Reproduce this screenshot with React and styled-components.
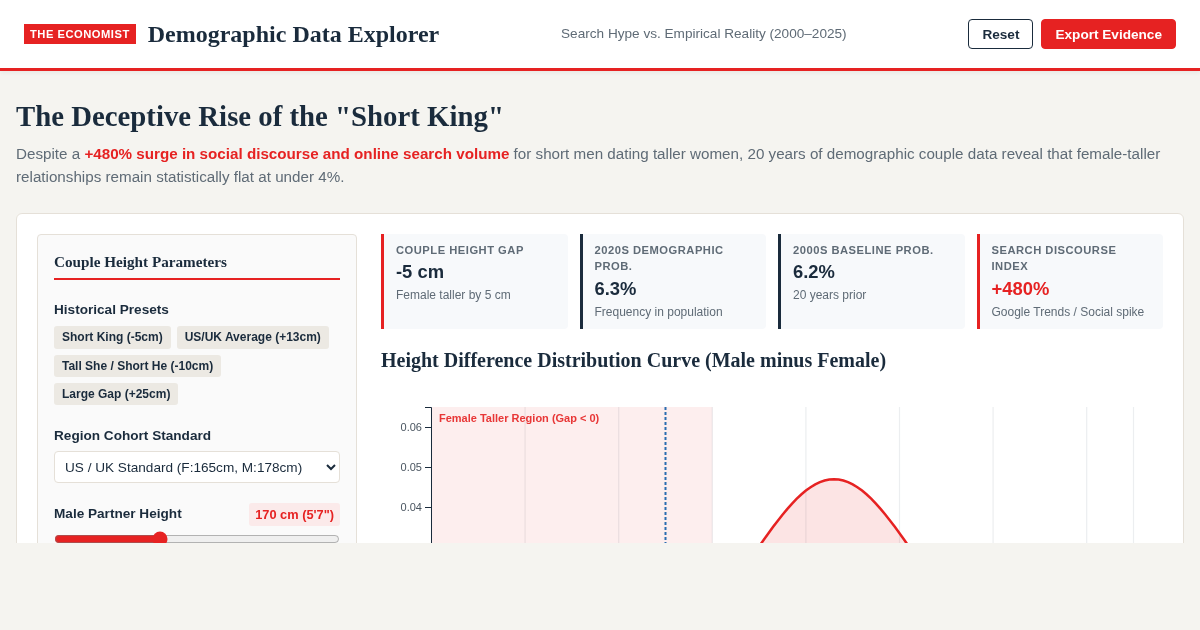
import React from 'react';
import styled, { createGlobalStyle } from 'styled-components';

const RED = '#e62222';
const NAVY = '#1a2b3c';
const GRAY = '#5f6b76';
const SANS = '"Liberation Sans", Arial, sans-serif';
const SERIF = '"Liberation Serif", "Times New Roman", serif';

const Global = createGlobalStyle`
  html, body { margin: 0; padding: 0; background: #f5f4f0; }
  * { box-sizing: border-box; }
  body { font-family: ${SANS}; color: ${NAVY}; }
`;
const Page = styled.div`height: 543px; overflow: hidden; will-change: transform;`;
const Header = styled.header`
  height: 71px; background: #fff; border-bottom: 3px solid ${RED};
  padding: 0 24px; display: flex; align-items: center; justify-content: space-between;
  box-shadow: 0 2px 4px rgba(0,0,0,.05); position: relative;
`;
const Brand = styled.div`display: flex; align-items: center; gap: 12px;`;
const Badge = styled.span`
  background: ${RED}; color: #fff; font-size: 11.2px; font-weight: 700; letter-spacing: .5px;
  padding: 0 6px; height: 20px; line-height: 20px; display: block;
`;
const AppTitle = styled.h1`margin: 0; font: 700 24px/30px ${SERIF}; color: ${NAVY};`;
const Subtitle = styled.div`font-size: 13.6px; color: ${GRAY}; position: relative; top: -1px;`;
const Actions = styled.div`display: flex; gap: 8px;`;
const Button = styled.button`
  height: 30px; padding: 0 13px; border-radius: 4px; font: 700 13.6px ${SANS};
  border: 1px solid ${p => (p.$primary ? RED : NAVY)};
  background: ${p => (p.$primary ? RED : '#fff')};
  color: ${p => (p.$primary ? '#fff' : NAVY)};
`;
const Main = styled.main`padding: 27px 16px 0;`;
const Headline = styled.h2`margin: 0 0 9px; font: 700 28.8px/36px ${SERIF}; color: ${NAVY};`;
const Lead = styled.p`margin: 0 0 24.8px; font-size: 15.2px; line-height: 22.8px; color: ${GRAY};`;
const Strong = styled.strong`color: ${RED}; font-weight: 700;`;
const Card = styled.section`
  background: #fff; border: 1px solid #e5e0d8; border-radius: 6px; padding: 20px;
  display: grid; grid-template-columns: 320px 1fr; gap: 24px;
`;
const Sidebar = styled.aside`
  background: #fafafa; border: 1px solid #e5e0d8; border-radius: 4px; padding: 16px;
`;
const SideTitle = styled.h3`
  margin: 0 0 20px; height: 29px; border-bottom: 2px solid ${RED};
  font: 700 15.2px/22px ${SERIF}; color: ${NAVY};
`;
const Field = styled.div`margin-bottom: 20.2px;`;
const Label = styled.div`font-size: 13.6px; line-height: 20px; font-weight: 700; color: ${NAVY};`;
const RangeLabel = styled(Label)`line-height: 21px;`;
const Chips = styled.div`display: flex; flex-wrap: wrap; gap: 6px; margin-top: 5.8px;`;
const Chip = styled.button`
  height: 22.4px; padding: 0 8px; border: 0; border-radius: 3px; background: #ece9e3;
  font: 700 12px ${SANS}; color: ${NAVY};
`;
const Select = styled.select`
  display: block; width: 100%; height: 32px; margin-top: 5.6px; padding: 0 6px; background: #fff;
  border: 1px solid #e5e0d8; border-radius: 4px; font: 13.6px ${SANS}; color: ${NAVY};
`;
const RangeHead = styled.div`display: flex; justify-content: space-between; align-items: flex-start;`;
const RangeValue = styled.span`
  background: #fbeaea; color: ${RED}; font-size: 12.8px; font-weight: 700; padding: 0 6px;
  height: 23px; line-height: 23px; border-radius: 3px;
`;
const Range = styled.input`
  display: block; width: 100%; margin: 5px 0 0; accent-color: ${RED};
`;
const Content = styled.div`min-width: 0;`;
const Stats = styled.div`display: grid; grid-template-columns: repeat(4, 1fr); gap: 12px;`;
const Stat = styled.div`
  background: #f7f9fb; border-left: 3px solid ${p => (p.$red ? RED : NAVY)};
  border-radius: 0 4px 4px 0; padding: 8px 12px; height: 95px;
`;
const StatLabel = styled.div`
  font-size: 11.2px; line-height: 16.08px; font-weight: 700; color: ${GRAY};
  letter-spacing: .5px; text-transform: uppercase;
`;
const StatValue = styled.div`
  font-size: 18.4px; line-height: 28px; font-weight: 700; color: ${p => (p.$red ? RED : NAVY)};
`;
const StatNote = styled.div`font-size: 12px; line-height: 18px; color: ${GRAY};`;
const ChartTitle = styled.h3`margin: 16px 0 12px; font: 700 20px/30px ${SERIF}; color: ${NAVY};`;
const Chart = styled.svg`display: block; width: 782px; height: 300px; font-family: ${SANS};`;

const stats = [
  { label: 'Couple Height Gap', value: '-5 cm', note: 'Female taller by 5 cm', red: true },
  { label: '2020s Demographic Prob.', value: '6.3%', note: 'Frequency in population' },
  { label: '2000s Baseline Prob.', value: '6.2%', note: '20 years prior' },
  { label: 'Search Discourse Index', value: '+480%', note: 'Google Trends / Social spike', red: true, redValue: true },
];
const presets = ['Short King (-5cm)', 'US/UK Average (+13cm)', 'Tall She / Short He (-10cm)', 'Large Gap (+25cm)'];

const X = g => 331.3 + (g * 702) / 75;
const Y = d => 40 + (0.06 - d) * 4000;
const pdf = g => Math.exp(-((g - 13) ** 2) / (2 * 8.5 * 8.5)) / (8.5 * Math.sqrt(2 * Math.PI));

function buildCurve() {
  const pts = [];
  for (let g = -30; g <= 45; g += 0.5) pts.push(`${X(g).toFixed(2)},${Y(pdf(g)).toFixed(2)}`);
  return pts;
}

function DistributionChart() {
  const pts = buildCurve();
  const line = `M${pts.join('L')}`;
  const area = `${line}L${X(45)},280L${X(-30)},280Z`;
  const grid = [-30, -20, -10, 0, 10, 20, 30, 40, 45];
  return (
    <Chart viewBox="0 0 782 300">
      {grid.map(g => <line key={g} x1={X(g)} x2={X(g)} y1="20" y2="280" stroke="#eceef0" strokeWidth="1.2" />)}
      <rect x={X(-30)} y="20" width={X(0) - X(-30)} height="260" fill={RED} fillOpacity="0.08" />
      <path d={area} fill={RED} fillOpacity="0.12" />
      <path d={line} fill="none" stroke={RED} strokeWidth="2.5" />
      <line x1={X(-5)} x2={X(-5)} y1="20" y2="280" stroke="#2b6cb0" strokeWidth="2" strokeDasharray="3 2" />
      <path d="M44 20.5H50.5V280" fill="none" stroke={NAVY} strokeWidth="1" />
      {[[0.06, 40], [0.05, 80], [0.04, 120]].map(([v, y]) => (
        <g key={v}>
          <line x1="44" x2="50" y1={y + 0.5} y2={y + 0.5} stroke={NAVY} />
          <text x="41" y={y + 4} textAnchor="end" fontSize="11" fill="#4a5560">{v.toFixed(2)}</text>
        </g>
      ))}
      <text x="58" y="35" fontSize="11" fontWeight="700" fill={RED} fillOpacity="0.9">Female Taller Region (Gap &lt; 0)</text>
    </Chart>
  );
}

export default function App() {
  return (
    <Page>
      <Global />
      <Header>
        <Brand>
          <Badge>THE ECONOMIST</Badge>
          <AppTitle>Demographic Data Explorer</AppTitle>
        </Brand>
        <Subtitle>Search Hype vs. Empirical Reality (2000–2025)</Subtitle>
        <Actions>
          <Button>Reset</Button>
          <Button $primary>Export Evidence</Button>
        </Actions>
      </Header>
      <Main>
        <Headline>The Deceptive Rise of the "Short King"</Headline>
        <Lead>
          Despite a <Strong>+480% surge in social discourse and online search volume</Strong> for short men dating taller women, 20 years of demographic couple data reveal that female-taller relationships remain statistically flat at under 4%.
        </Lead>
        <Card>
          <Sidebar>
            <SideTitle>Couple Height Parameters</SideTitle>
            <Field>
              <Label>Historical Presets</Label>
              <Chips>{presets.map(p => <Chip key={p}>{p}</Chip>)}</Chips>
            </Field>
            <Field>
              <Label>Region Cohort Standard</Label>
              <Select defaultValue="us"><option value="us">US / UK Standard (F:165cm, M:178cm)</option></Select>
            </Field>
            <Field>
              <RangeHead>
                <RangeLabel>Male Partner Height</RangeLabel>
                <RangeValue>170 cm (5'7")</RangeValue>
              </RangeHead>
              <Range type="range" min="150" max="205" defaultValue="170" />
            </Field>
          </Sidebar>
          <Content>
            <Stats>
              {stats.map(s => (
                <Stat key={s.label} $red={s.red}>
                  <StatLabel>{s.label}</StatLabel>
                  <StatValue $red={s.redValue}>{s.value}</StatValue>
                  <StatNote>{s.note}</StatNote>
                </Stat>
              ))}
            </Stats>
            <ChartTitle>Height Difference Distribution Curve (Male minus Female)</ChartTitle>
            <DistributionChart />
          </Content>
        </Card>
      </Main>
    </Page>
  );
}
